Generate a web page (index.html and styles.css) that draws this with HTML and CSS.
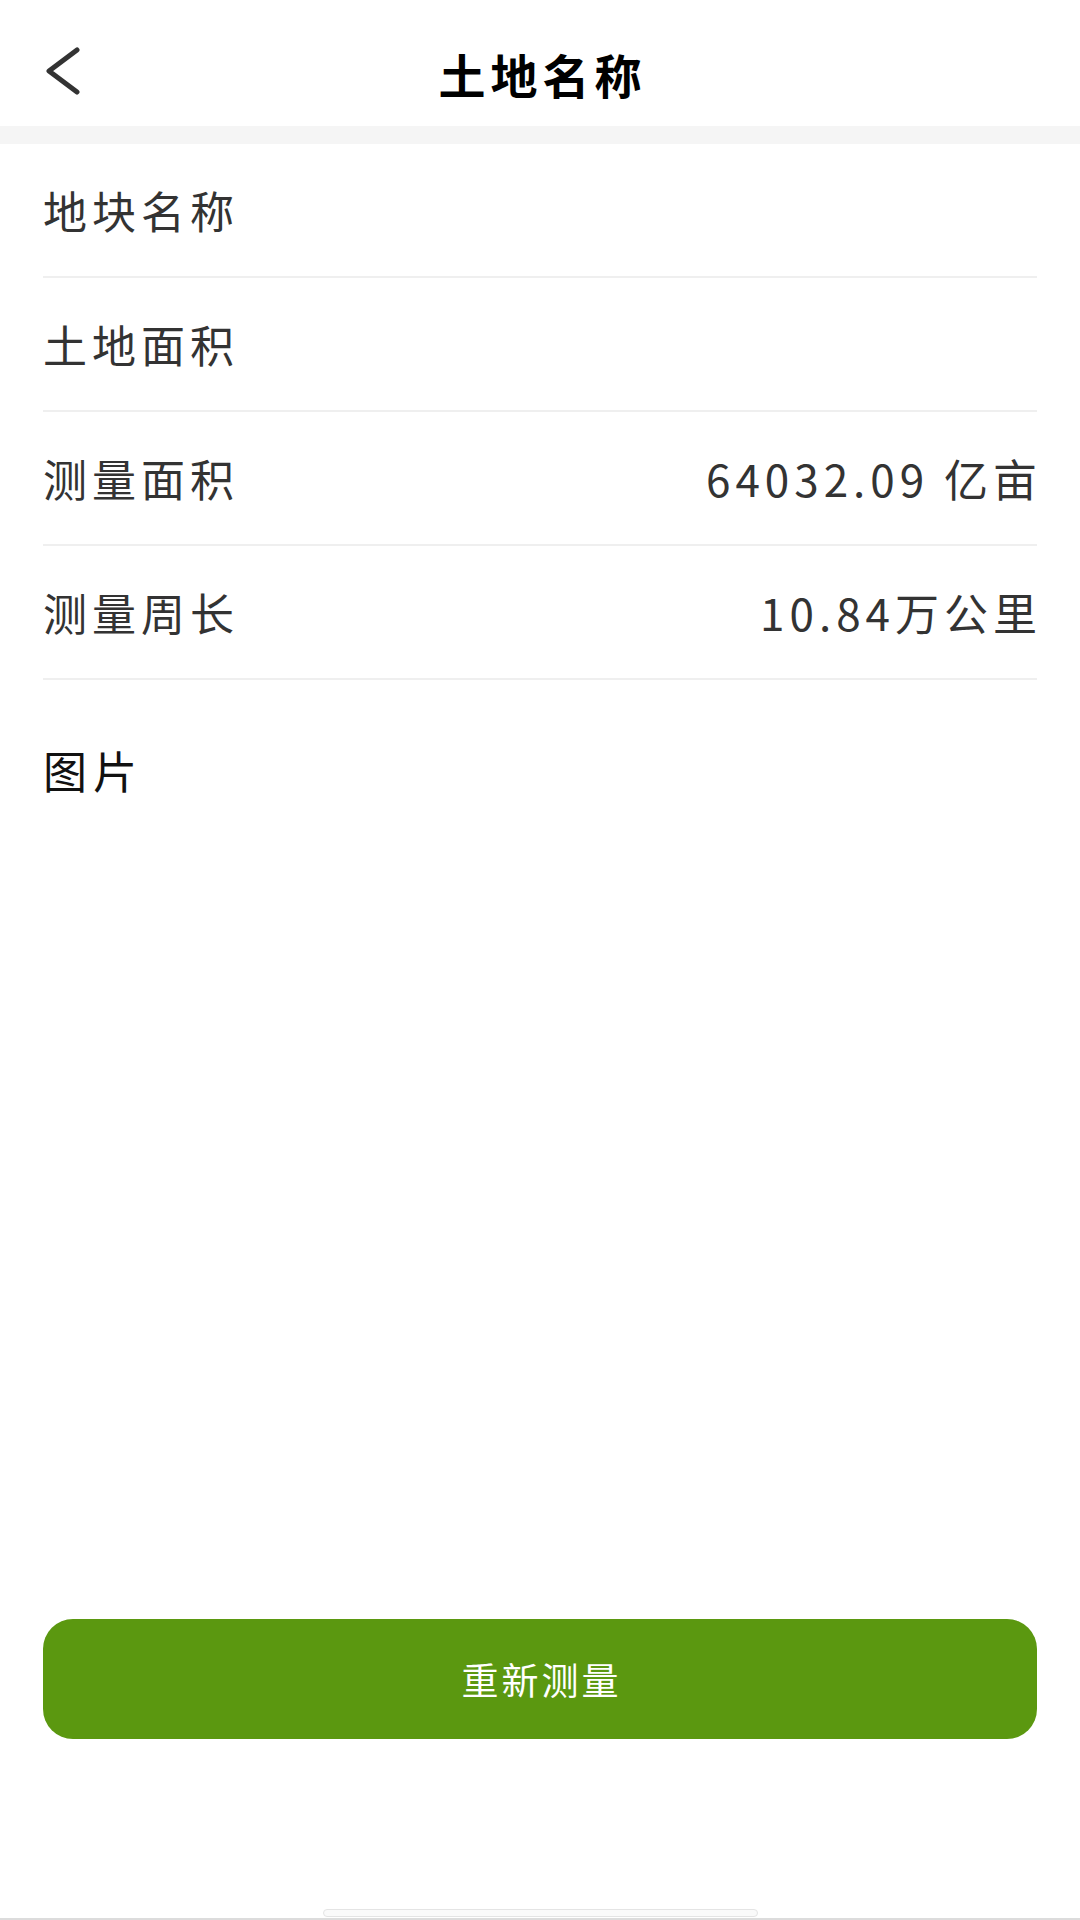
FILE: index.html
```html
<!DOCTYPE html>
<html lang="zh-CN">
<head>
<meta charset="utf-8">
<title>土地名称</title>
<link rel="stylesheet" href="styles.css">
</head>
<body>
<div class="page">
  <header class="header">
    <svg class="back" width="40" height="52" viewBox="0 0 40 52">
      <polyline points="33,3 5,24 33,45" fill="none" stroke="#333" stroke-width="5" stroke-linecap="round" stroke-linejoin="round"/>
    </svg>
    <h1 class="title">土地名称</h1>
  </header>
  <div class="band"></div>
  <main class="content">
    <div class="row"><span class="label">地块名称</span><span class="value"></span></div>
    <div class="row"><span class="label">土地面积</span><span class="value"></span></div>
    <div class="row"><span class="label">测量面积</span><span class="value">64032.09 亿亩</span></div>
    <div class="row"><span class="label">测量周长</span><span class="value">10.84万公里</span></div>
    <div class="pics"><span class="pics-label">图片</span></div>
  </main>
  <button class="btn">重新测量</button>
  <div class="bottom"><div class="home-bar"></div></div>
</div>
</body>
</html>
```
FILE: styles.css
```css
html, body {
  margin: 0;
  padding: 0;
  background: #fff;
}
body {
  font-family: "Noto Sans CJK SC", "Noto Sans", sans-serif;
}
.page {
  width: 1080px;
  height: 1920px;
  display: flex;
  flex-direction: column;
  background: #fff;
}
.header {
  height: 126px;
  box-sizing: border-box;
  padding-top: 20px;
  display: flex;
  align-items: center;
  position: relative;
  background: #fff;
}
.back {
  margin-left: 44px;
  display: block;
}
.title {
  position: absolute;
  left: 0;
  right: 0;
  top: 20px;
  bottom: 0;
  margin: 0;
  display: flex;
  align-items: center;
  justify-content: center;
  font-size: 47px;
  font-weight: 700;
  color: #000;
  letter-spacing: 5px;
  padding-left: 5px;
}
.band {
  height: 18px;
  background: #f5f5f5;
}
.content {
  padding: 0 43px;
  flex: 1;
}
.row {
  height: 134px;
  box-sizing: border-box;
  border-bottom: 2px solid #efefef;
  display: flex;
  align-items: center;
  justify-content: space-between;
  font-size: 44px;
  color: #333;
}
.label {
  letter-spacing: 5px;
}
.value {
  letter-spacing: 5px;
  margin-right: -5px;
}
.pics {
  padding-top: 64px;
  font-size: 44px;
  color: #111;
  line-height: 52px;
}
.pics-label {
  letter-spacing: 6px;
}
.btn {
  margin: 0 43px;
  height: 120px;
  border: none;
  border-radius: 30px;
  background: #5b9810;
  color: #fff;
  font-family: "Noto Sans CJK SC", "Noto Sans", sans-serif;
  font-size: 37px;
  letter-spacing: 3px;
  padding: 0 0 0 3px;
}
.bottom {
  height: 181px;
  display: flex;
  align-items: flex-end;
  justify-content: center;
  border-bottom: 2px solid #dcdcdc;
  box-sizing: border-box;
}
.home-bar {
  width: 433px;
  height: 6px;
  margin-bottom: 1px;
  border: 1px solid #e4e4e4;
  border-radius: 4px;
  background: #fafafa;
}
```
